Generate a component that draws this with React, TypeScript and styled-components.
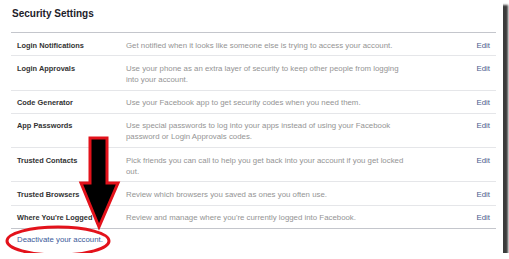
import React from "react";
import styled, { createGlobalStyle } from "styled-components";

const Global = createGlobalStyle`
  html, body { margin: 0; padding: 0; background: #ffffff; }
  body { font-family: "Liberation Sans", Arial, sans-serif; }
`;

const Panel = styled.div`
  position: relative;
  box-sizing: border-box;
  width: 503px;
  height: 253px;
  background: #fff;
  padding: 0 7px 0 11px;
  box-shadow: 5px 5px 2px rgba(25, 25, 25, 0.85);
`;

const Title = styled.h2`
  margin: 0;
  box-sizing: border-box;
  height: 32px;
  padding: 8px 0 0 1px;
  font-size: 10px;
  line-height: 12px;
  font-weight: bold;
  color: #1d2129;
`;

const Table = styled.div`
  border-top: 1px solid #c4c6cc;
  border-bottom: 1px solid #c4c6cc;
`;

const Row = styled.div`
  display: grid;
  grid-template-columns: 109px 283px 1fr;
  padding: 6.5px 6px 4.75px 6px;
  font-size: 7.85px;
  line-height: 11px;
  & + & { border-top: 1px solid #e5e6e9; }
`;

const Label = styled.div`
  font-weight: bold;
  color: #333;
  font-size: 7.4px;
`;

const Desc = styled.div`
  color: #949494;
`;

const EditLink = styled.a`
  justify-self: end;
  color: #4b5a8c;
`;

const Footer = styled.div`
  padding: 5.5px 6px 0;
  font-size: 7.8px;
  line-height: 11px;
  color: #3b5998;
`;

const Overlay = styled.svg`
  position: absolute;
  left: 0;
  top: 0;
  pointer-events: none;
`;

const rows: { label: string; desc: string }[] = [
  { label: "Login Notifications", desc: "Get notified when it looks like someone else is trying to access your account." },
  { label: "Login Approvals", desc: "Use your phone as an extra layer of security to keep other people from logging into your account." },
  { label: "Code Generator", desc: "Use your Facebook app to get security codes when you need them." },
  { label: "App Passwords", desc: "Use special passwords to log into your apps instead of using your Facebook password or Login Approvals codes." },
  { label: "Trusted Contacts", desc: "Pick friends you can call to help you get back into your account if you get locked out." },
  { label: "Trusted Browsers", desc: "Review which browsers you saved as ones you often use." },
  { label: "Where You're Logged", desc: "Review and manage where you're currently logged into Facebook." },
];

export default function App() {
  return (
    <>
      <Global />
      <Panel>
        <Title>Security Settings</Title>
        <Table>
          {rows.map((r) => (
            <Row key={r.label}>
              <Label>{r.label}</Label>
              <Desc>{r.desc}</Desc>
              <EditLink>Edit</EditLink>
            </Row>
          ))}
        </Table>
        <Footer>Deactivate your account.</Footer>
        <Overlay width="503" height="259" viewBox="0 0 503 259">
          <ellipse cx="58" cy="241" rx="51" ry="14" fill="none" stroke="#e3121b" strokeWidth="3" />
          <polygon
            points="90,138 107,138 107,183 118,183 99,227 81,183 90,183"
            fill="#000"
            stroke="#e3121b"
            strokeWidth="3"
            strokeLinejoin="miter"
          />
        </Overlay>
      </Panel>
    </>
  );
}
